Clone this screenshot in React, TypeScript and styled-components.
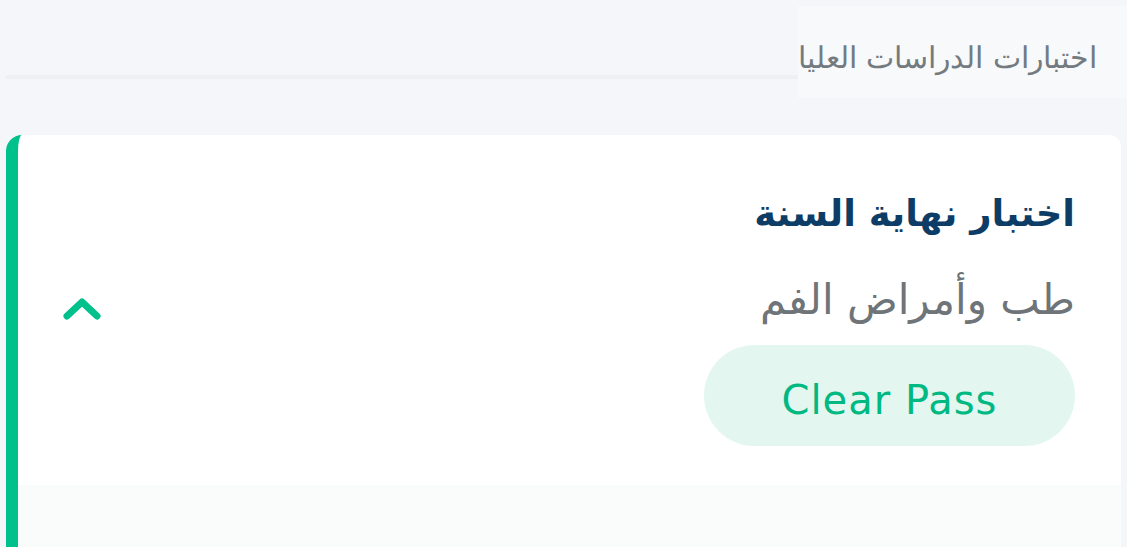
import React from "react";
import styled, { createGlobalStyle } from "styled-components";

const GlobalStyle = createGlobalStyle`
  body {
    margin: 0;
    background: #f5f6fa;
    font-family: "DejaVu Sans", "Noto Sans", sans-serif;
  }
`;

const Page = styled.div`
  width: 1127px;
  height: 547px;
  overflow: hidden;
  background: #f5f6fa;
`;

const Header = styled.div`
  display: flex;
  align-items: flex-start;
  padding-top: 6px;
  height: 135px;
  box-sizing: border-box;
`;

const HeaderLine = styled.div`
  flex: 1;
  height: 4px;
  margin: 69px 0 0 6px;
  background: #eef0f3;
`;

const Tab = styled.div`
  width: 329px;
  height: 92px;
  box-sizing: border-box;
  padding: 10px 30px 0 0;
  display: flex;
  align-items: center;
  justify-content: flex-start;
  background: #f8f9fb;
  direction: rtl;
  font-size: 30px;
  font-weight: 300;
  color: #737b80;
  letter-spacing: -0.5px;
  white-space: nowrap;
`;

const Card = styled.div`
  margin: 0 6px;
  background: #ffffff;
  border-left: 12px solid #00c08b;
  border-radius: 16px 12px 0 0;
  height: 412px;
  display: flex;
  flex-direction: column;
`;

const CardBody = styled.div`
  height: 350px;
  display: flex;
  align-items: flex-start;
  justify-content: space-between;
  padding: 0 46px 0 45px;
`;

const CardFooter = styled.div`
  flex: 1;
  background: #fafbfb;
`;

const Toggle = styled.button`
  border: none;
  background: none;
  padding: 0;
  display: flex;
  margin-top: 161px;
  cursor: pointer;
`;

const Info = styled.div`
  display: flex;
  flex-direction: column;
  align-items: flex-start;
  direction: rtl;
  padding-top: 54px;
`;

const Title = styled.h2`
  margin: 0;
  font-size: 37px;
  font-weight: 700;
  color: #0d3d66;
  line-height: 50px;
`;

const Subtitle = styled.div`
  margin-top: 36px;
  font-size: 42px;
  color: #6e7477;
  line-height: 50px;
`;

const Pill = styled.div`
  margin-top: 20px;
  width: 371px;
  height: 101px;
  box-sizing: border-box;
  padding-top: 8px;
  border-radius: 51px;
  background: #e3f7f0;
  display: flex;
  align-items: center;
  justify-content: center;
  direction: ltr;
  font-size: 40px;
  color: #00b882;
  letter-spacing: 1px;
`;

export default function App() {
  return (
    <Page>
      <GlobalStyle />
      <Header>
        <HeaderLine />
        <Tab>اختبارات الدراسات العليا</Tab>
      </Header>
      <Card>
        <CardBody>
          <Toggle aria-label="collapse">
            <svg width="38" height="26" viewBox="0 0 38 26">
              <path
                d="M4 20 L19 6 L34 20"
                fill="none"
                stroke="#00c08b"
                strokeWidth="7"
                strokeLinecap="round"
                strokeLinejoin="round"
              />
            </svg>
          </Toggle>
          <Info>
            <Title>اختبار نهاية السنة</Title>
            <Subtitle>طب وأمراض الفم</Subtitle>
            <Pill>Clear Pass</Pill>
          </Info>
        </CardBody>
        <CardFooter />
      </Card>
    </Page>
  );
}
